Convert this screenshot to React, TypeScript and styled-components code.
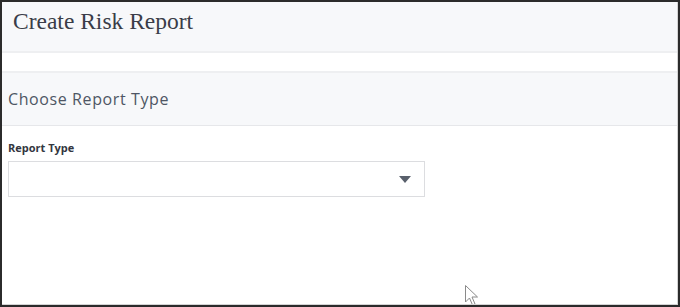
import React from "react";
import styled, { createGlobalStyle } from "styled-components";

const GlobalStyle = createGlobalStyle`
	html, body {
		margin: 0;
		padding: 0;
		background: #2b2b2b;
	}
	* {
		box-sizing: border-box;
	}
`;

const Frame = styled.div`
	width: 680px;
	height: 307px;
	padding: 2px;
	background: #2b2b2b;
`;

const Page = styled.div`
	position: relative;
	height: 100%;
	background: #ffffff;
	border-right: 1px solid #d4d4d4;
	border-bottom: 1px solid #d4d4d4;
	display: flex;
	flex-direction: column;
	overflow: hidden;
`;

const PageHeader = styled.header`
	height: 51px;
	background: #f7f8fa;
	border-bottom: 2px solid #eeeff1;
	padding: 6px 11px 0;
`;

const Title = styled.h1`
	margin: 0;
	font-family: "Liberation Serif", serif;
	font-weight: 400;
	font-size: 23.5px;
	line-height: 27px;
	color: #3a3d48;
`;

const Spacer = styled.div`
	height: 18px;
`;

const SectionHeader = styled.div`
	height: 55px;
	background: #f7f8fa;
	border-top: 2px solid #eeeff1;
	border-bottom: 1px solid #e6e7ea;
	display: flex;
	align-items: center;
	padding: 0 6px;
`;

const SectionTitle = styled.h2`
	margin: 0;
	font-family: "Open Sans", sans-serif;
	font-weight: 400;
	font-size: 16px;
	letter-spacing: 0.6px;
	color: #4e5664;
`;

const Form = styled.div`
	padding: 15px 6px;
	display: flex;
	flex-direction: column;
	gap: 6px;
`;

const Label = styled.label`
	font-family: "Open Sans", sans-serif;
	font-weight: 700;
	font-size: 11px;
	line-height: 14px;
	color: #333640;
`;

const Select = styled.div`
	width: 417px;
	height: 36px;
	border: 1px solid #dcdde0;
	background: #ffffff;
	display: flex;
	align-items: center;
	justify-content: flex-end;
	padding-right: 13px;
`;

const Caret = styled.span`
	width: 0;
	height: 0;
	border-left: 6.5px solid transparent;
	border-right: 6.5px solid transparent;
	border-top: 7px solid #59606c;
	margin-top: 1px;
`;

const Cursor = styled.svg`
	position: absolute;
	left: 463px;
	top: 283px;
`;

export default function App() {
	return (
		<>
			<GlobalStyle />
			<Frame>
				<Page>
					<PageHeader>
						<Title>Create Risk Report</Title>
					</PageHeader>
					<Spacer />
					<SectionHeader>
						<SectionTitle>Choose Report Type</SectionTitle>
					</SectionHeader>
					<Form>
						<Label>Report Type</Label>
						<Select>
							<Caret />
						</Select>
					</Form>
					<Cursor width="16" height="24" viewBox="0 0 16 24">
						<path
							d="M0.5 0.5 L0.5 17 L4.5 13 L7.5 20 L10 19 L7 12 L12.5 12 Z"
							fill="#ffffff"
							stroke="#8a8a8a"
							strokeWidth="1"
						/>
					</Cursor>
				</Page>
			</Frame>
		</>
	);
}
